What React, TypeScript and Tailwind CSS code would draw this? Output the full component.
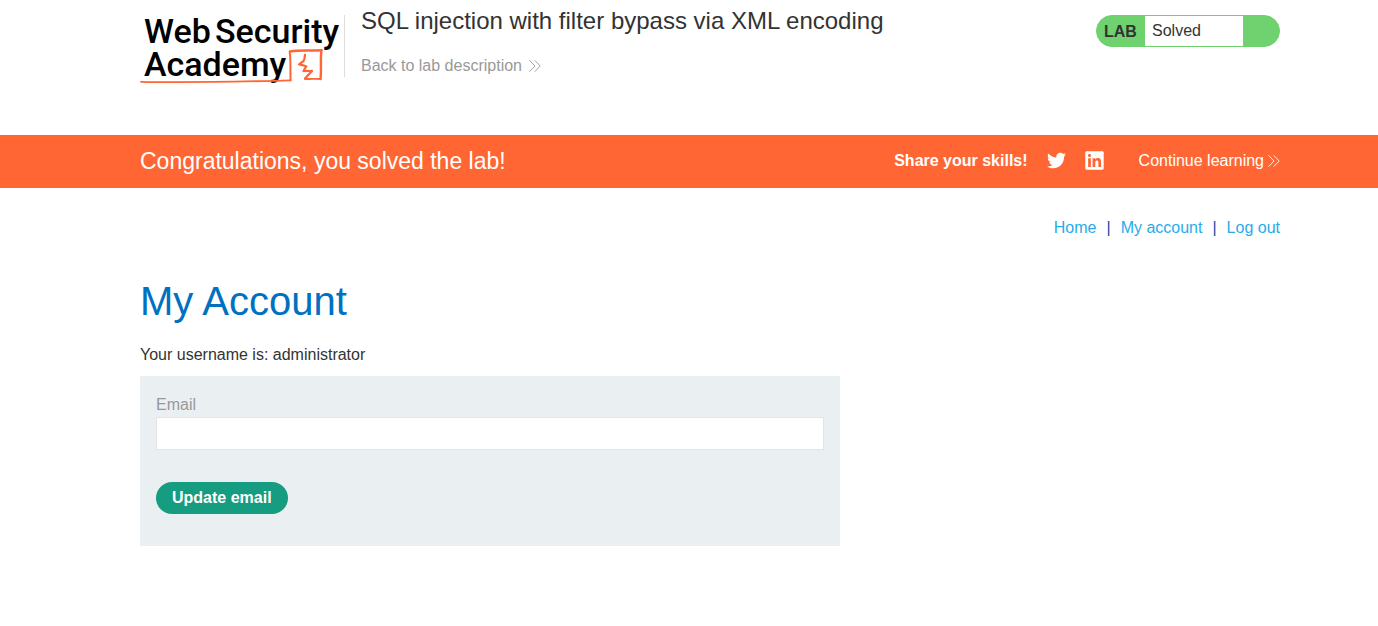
import { FaLinkedin, FaTwitter } from "react-icons/fa";

function Logo() {
  return (
    <svg
      className="block h-[70px] w-[200px] shrink-0 overflow-visible"
      viewBox="140 15 200 70"
      role="img"
      aria-label="Web Security Academy"
    >
      <g className="fill-black font-['Roboto',sans-serif] text-[34px] font-medium">
        <text x="144" y="43">Web</text>
        <text x="215" y="43">Security</text>
        <text x="144" y="76">Academy</text>
      </g>
      <g fill="none" stroke="#ff6633" strokeLinecap="round" strokeLinejoin="round">
        <path strokeWidth="1.8" d="M141 81.8C180 82.6 230 81.800 275 80.800L290.500 80.300" />
        <path strokeWidth="2" d="M290.600 80.200C290.100 70 291 60 289.700 51.800" />
        <path strokeWidth="2.400" d="M290 51.500C300 49.800 310 51 321.400 50.300" />
        <path strokeWidth="2.400" d="M321.400 50.300C320.200 60 321.600 70 320.500 79" />
        <path strokeWidth="1.800" d="M320.500 79C315 78.400 310 79.400 305 78.800" />
        <path
          strokeWidth="2.200"
          d="M305 54.800C304.700 57.500 304.600 59.500 303.600 61L299 64.300C301.500 65.300 304 65 306.300 66.400C305.500 68 303.900 69.400 303.500 71.200C306.500 70.700 309 71.200 312 70.900L305 78.600"
        />
      </g>
    </svg>
  );
}

function Chevrons() {
  return (
    <svg className="h-3 w-3 shrink-0" viewBox="0 0 12 12" fill="none" stroke="currentColor" strokeWidth="0.9" aria-hidden="true">
      <path d="M0.500 0.300L6 6L0.500 11.700M5.700 0.300L11.200 6L5.700 11.700" />
    </svg>
  );
}

function LabStatus() {
  return (
    <div className="flex h-8 w-[184px] items-stretch overflow-hidden rounded-full border border-[#6fd26f] bg-[#6fd26f]">
      <span className="w-12 pl-[7px] text-base leading-[31px] font-bold">LAB</span>
      <p className="w-[98px] bg-white pl-[7px] text-base leading-[29px]">Solved</p>
      <span className="w-9 shrink-0" />
    </div>
  );
}

function Header() {
  return (
    <header className="flex min-h-[135px] items-start pt-[15px] pr-[98px] pl-[140px]">
      <Logo />
      <div className="ml-1 h-[62px] border-l border-[#dddddd] pl-4">
        <h2 className="text-2xl leading-3">SQL injection with filter bypass via XML encoding</h2>
        <a href="#lab" className="mt-[27px] flex items-center gap-[7px] text-base leading-6 text-[#999999]">
          Back to lab description
          <Chevrons />
        </a>
      </div>
      <div className="ml-auto">
        <LabStatus />
      </div>
    </header>
  );
}

function SolvedBanner() {
  return (
    <section className="flex h-[53px] items-center bg-[#ff6633] pr-[98px] pb-[2px] pl-[140px] text-white">
      <h4 className="text-[23px] leading-8">Congratulations, you solved the lab!</h4>
      <div className="ml-auto flex items-center text-base">
        <span className="font-bold">Share your skills!</span>
        <a href="#twitter" aria-label="Share on Twitter" className="ml-[19px]">
          <FaTwitter size={19} />
        </a>
        <a href="#linkedin" aria-label="Share on LinkedIn" className="ml-[18px]">
          <FaLinkedin size={21} />
        </a>
        <a href="#continue" className="ml-[26px] flex items-center gap-1 pl-2">
          Continue learning
          <Chevrons />
        </a>
      </div>
    </section>
  );
}

export default function App() {
  return (
    <div className="min-h-screen bg-white font-['Liberation_Sans',Arial,sans-serif] text-[#333332]">
      <Header />
      <SolvedBanner />
      <main className="pt-7 pr-[98px] pl-[140px]">
        <nav className="flex justify-end gap-[10px] text-base leading-6 text-[#29abe9]">
          <a href="#home">Home</a>
          <span className="text-[#1a4aa0]">|</span>
          <a href="#account">My account</a>
          <span className="text-[#1a4aa0]">|</span>
          <a href="#logout">Log out</a>
        </nav>
        <h1 className="mt-9 text-[40px] leading-[50px] text-[#0070c0]">My Account</h1>
        <p className="mt-[17px] text-base leading-6">Your username is: administrator</p>
        <form className="mt-[9px] w-full max-w-[700px] bg-[#eaeff2] px-4 pt-4 pb-8" onSubmit={(e) => e.preventDefault()}>
          <label htmlFor="email" className="block text-base leading-[25px] text-[#999999]">
            Email
          </label>
          <input
            id="email"
            type="email"
            className="block h-[33px] w-full border border-[#e4e4e4] bg-white px-2 text-base outline-none"
          />
          <button type="submit" className="mt-8 block h-8 rounded-full bg-[#169c80] px-4 text-base leading-8 font-bold text-white">
            Update email
          </button>
        </form>
      </main>
    </div>
  );
}
